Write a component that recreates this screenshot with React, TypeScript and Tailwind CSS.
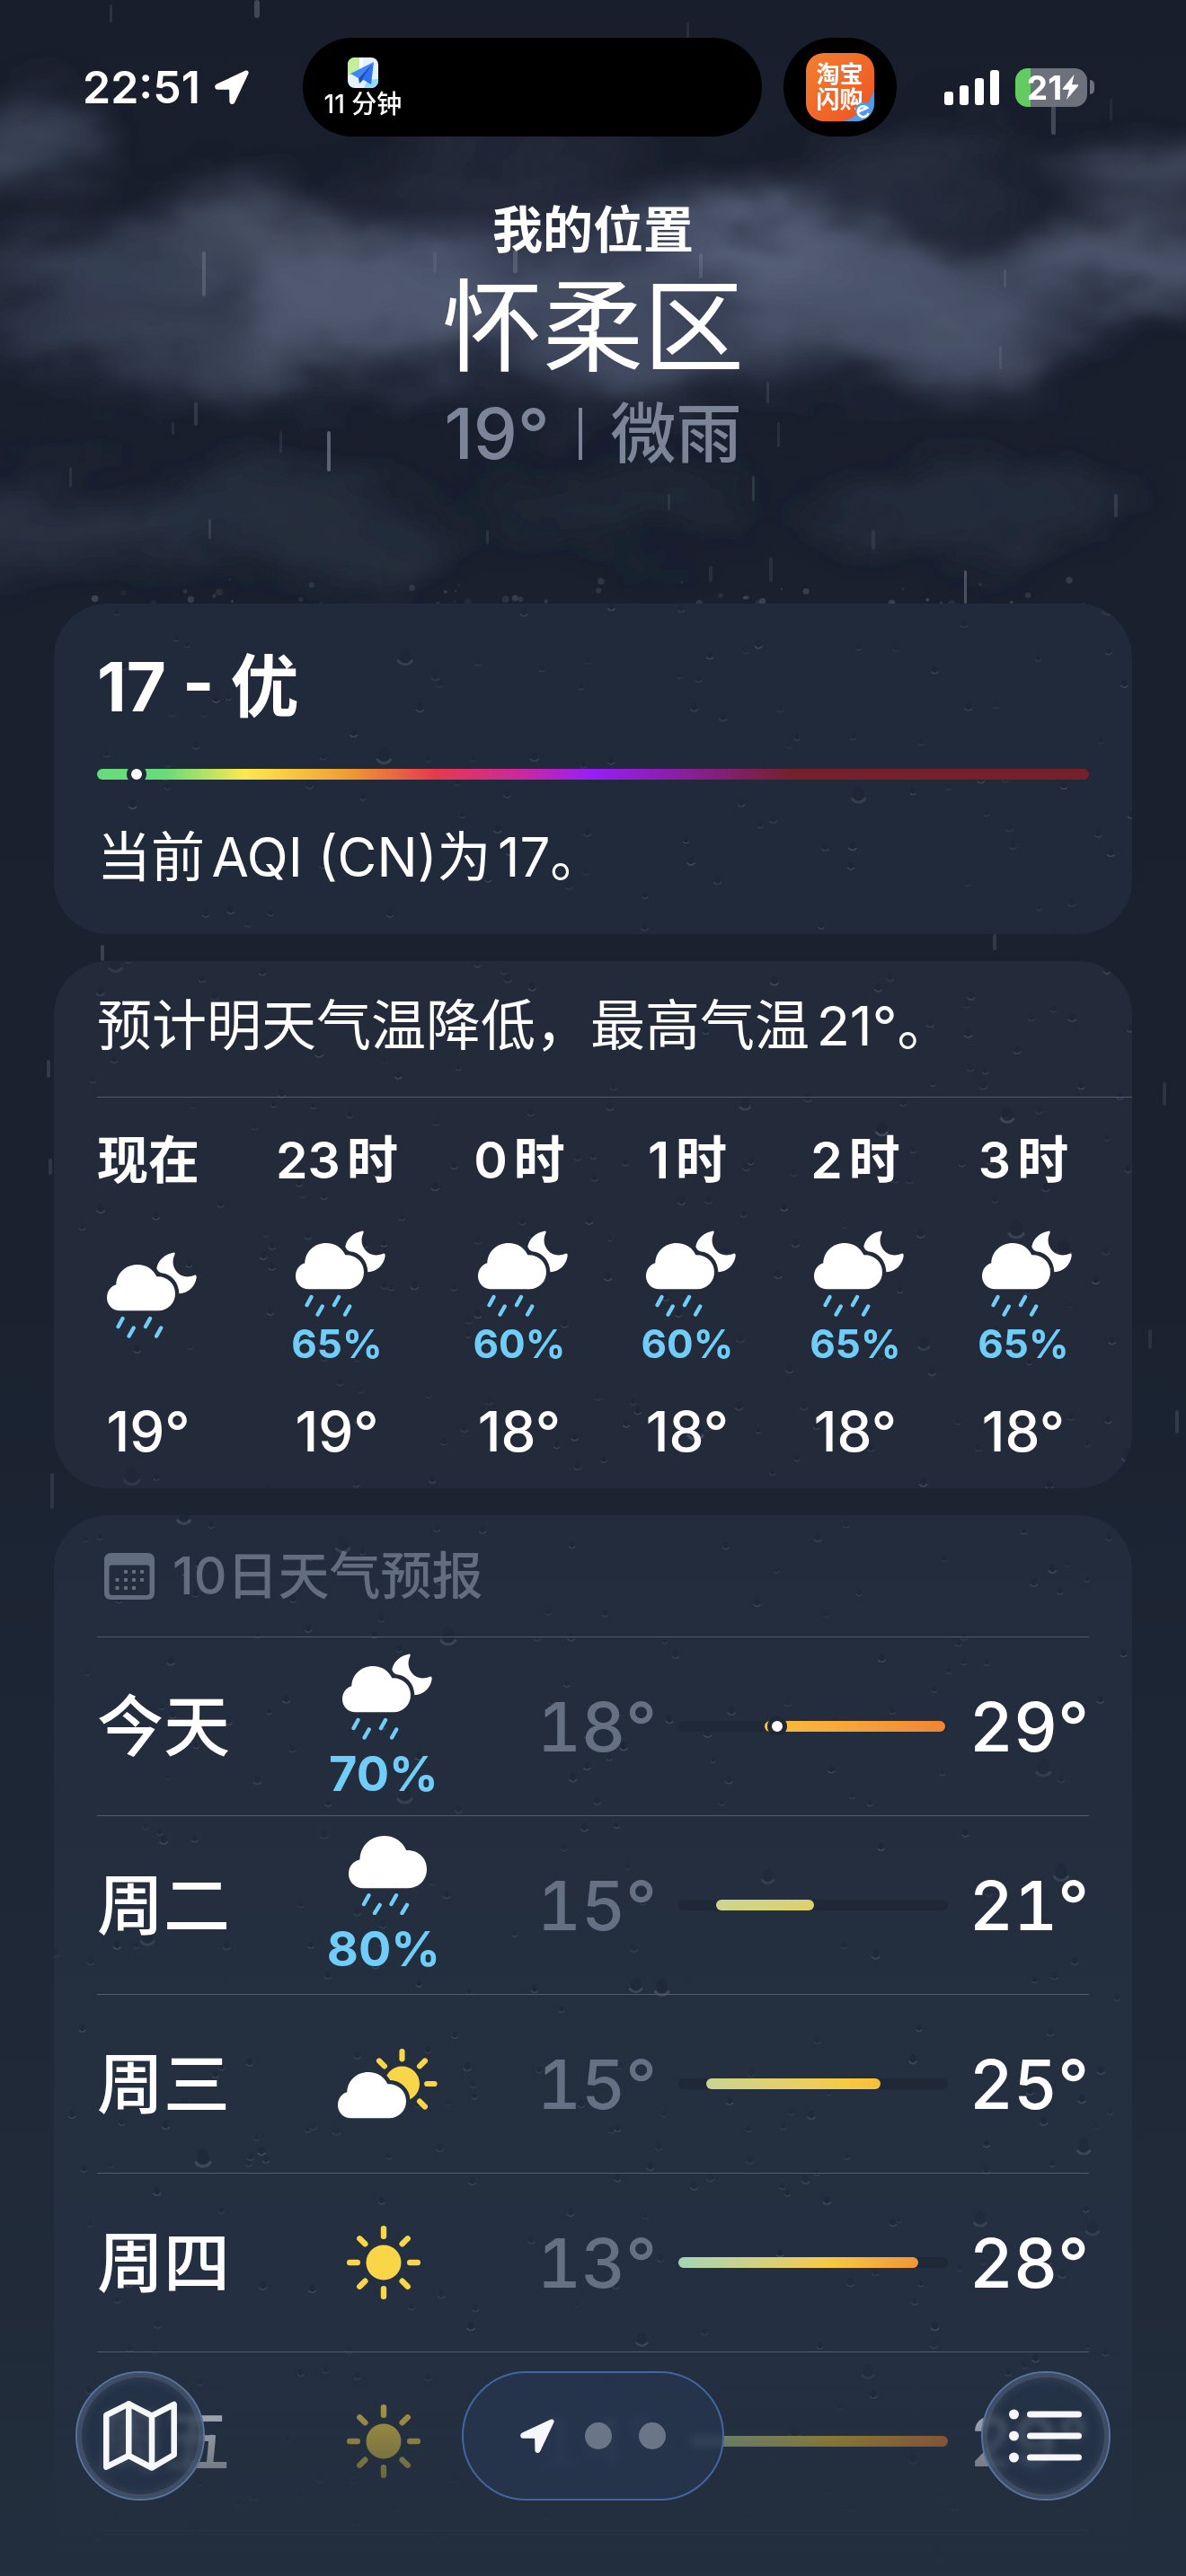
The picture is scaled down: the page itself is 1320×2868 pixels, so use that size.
import type { ReactNode } from "react";

type IconProps = { className?: string };

const RAIN = "#70cdf8";
const SUN = "#f8d648";

function seeded(seed: number) {
  let s = seed;
  return () => {
    s = (s * 1664525 + 1013904223) % 4294967296;
    return s / 4294967296;
  };
}

/* ---------- scenery ---------- */

const CLOUDS = [
  { x: 660, y: 330, rx: 640, ry: 95, c: "#363f54", o: 0.75 },
  { x: 30, y: 165, rx: 75, ry: 34, c: "#4e5970", o: 0.75 },
  { x: 1290, y: 195, rx: 110, ry: 28, c: "#56617a", o: 0.75 },
  { x: 560, y: 185, rx: 170, ry: 26, c: "#384256", o: 0.5 },
  { x: 1010, y: 190, rx: 130, ry: 34, c: "#384256", o: 0.5 },
  { x: 270, y: 265, rx: 120, ry: 46, c: "#4b556b", o: 0.7 },
  { x: 90, y: 300, rx: 130, ry: 40, c: "#3f495e", o: 0.6 },
  { x: 410, y: 335, rx: 150, ry: 66, c: "#59637b", o: 0.8 },
  { x: 620, y: 310, rx: 170, ry: 46, c: "#4c566d", o: 0.7 },
  { x: 860, y: 272, rx: 120, ry: 30, c: "#65708c", o: 0.85 },
  { x: 960, y: 320, rx: 170, ry: 56, c: "#566078", o: 0.7 },
  { x: 1060, y: 385, rx: 120, ry: 46, c: "#4d576d", o: 0.6 },
  { x: 1260, y: 290, rx: 130, ry: 40, c: "#59637b", o: 0.8 },
  { x: 200, y: 400, rx: 190, ry: 30, c: "#434d62", o: 0.7 },
  { x: 690, y: 400, rx: 130, ry: 48, c: "#49536a", o: 0.75 },
  { x: 70, y: 585, rx: 190, ry: 50, c: "#2b3748", o: 0.75 },
  { x: 1080, y: 570, rx: 170, ry: 34, c: "#273243", o: 0.7 },
  { x: 330, y: 580, rx: 160, ry: 50, c: "#273243", o: 0.7 },
  { x: 690, y: 560, rx: 160, ry: 26, c: "#222c3c", o: 0.7 },
];

const STREAKS = [
  [283, 0, 20, 6, 0.25], [122, 5, 20, 3, 0.12], [764, 25, 18, 3, 0.1], [1170, 112, 38, 5, 0.25],
  [1235, 110, 24, 3, 0.08], [225, 280, 50, 4, 0.2], [571, 278, 26, 5, 0.2], [482, 280, 24, 4, 0.1],
  [778, 282, 28, 4, 0.15], [364, 480, 45, 4, 0.4], [216, 448, 26, 4, 0.15], [311, 480, 24, 3, 0.1],
  [837, 530, 28, 3, 0.14], [865, 470, 28, 3, 0.1], [1240, 550, 26, 4, 0.14], [1073, 635, 37, 3, 0.3],
  [232, 578, 22, 3, 0.14], [743, 550, 18, 3, 0.1], [541, 590, 16, 3, 0.12], [970, 590, 22, 4, 0.1],
  [856, 620, 28, 4, 0.1], [789, 630, 18, 4, 0.1], [77, 520, 22, 3, 0.1], [1117, 300, 20, 3, 0.12],
  [1112, 385, 26, 3, 0.1], [853, 425, 24, 3, 0.12], [191, 470, 14, 3, 0.1], [112, 1052, 18, 4, 0.2],
  [1105, 1040, 18, 4, 0.15], [1294, 1205, 26, 4, 0.12], [1278, 1480, 22, 4, 0.1], [1308, 1570, 26, 4, 0.15],
  [52, 1180, 20, 4, 0.15], [54, 1290, 18, 4, 0.14], [56, 1640, 40, 4, 0.12],
];

function Scenery() {
  const rand = seeded(19);
  const splashes = Array.from({ length: 44 }, () => ({
    x: 70 + rand() * 1180,
    y: 672 - rand() * rand() * 38,
    r: 1 + rand() * 3,
    o: 0.06 + rand() * 0.16,
  }));
  return (
    <svg
      className="pointer-events-none absolute inset-x-0 top-0 w-full"
      viewBox="0 0 1320 1700"
      aria-hidden="true"
    >
      <defs>
        <filter id="cloud" x="-20%" y="-20%" width="140%" height="140%">
          <feTurbulence type="fractalNoise" baseFrequency="0.006 0.012" numOctaves="5" seed="8" result="n" />
          <feGaussianBlur in="SourceGraphic" stdDeviation="24" result="b" />
          <feDisplacementMap in="b" in2="n" scale="120" xChannelSelector="R" yChannelSelector="G" />
          <feGaussianBlur stdDeviation="5" />
        </filter>
      </defs>
      <g filter="url(#cloud)">
        {CLOUDS.map((c, i) => (
          <ellipse key={i} cx={c.x} cy={c.y} rx={c.rx} ry={c.ry} fill={c.c} opacity={c.o} />
        ))}
      </g>
      {STREAKS.map(([x, y, h, w, o], i) => (
        <rect key={i} x={x} y={y} width={w} height={h} rx={w / 2} fill="#b9c6da" opacity={o} />
      ))}
      {splashes.map((p, i) => (
        <circle key={i} cx={p.x} cy={p.y} r={p.r} fill="#b9c6da" opacity={p.o} />
      ))}
    </svg>
  );
}

function Drops({ seed, height, count }: { seed: number; height: number; count: number }) {
  const rand = seeded(seed);
  const drops = Array.from({ length: count }, () => ({
    x: rand() * 1200,
    y: rand() * height,
    r: rand() > 0.94 ? 7 + rand() * 3 : 3 + rand() * 2,
    o: 0.4 + rand() * 0.6,
  }));
  return (
    <svg
      className="pointer-events-none absolute inset-0 h-full w-full"
      viewBox={`0 0 1200 ${height}`}
      preserveAspectRatio="xMidYMid slice"
      aria-hidden="true"
    >
      {drops.map((d, i) => (
        <g key={i} transform={`translate(${d.x} ${d.y})`} opacity={d.o}>
          <ellipse rx={d.r * 0.7} ry={d.r} cy={-d.r * 0.3} fill="#182130" opacity="0.4" />
          <path
            d={`M${-d.r * 0.8} ${d.r * 0.3}A${d.r} ${d.r} 0 0 0 ${d.r * 0.8} ${d.r * 0.3}`}
            fill="none"
            stroke="#8f9db3"
            strokeWidth={d.r * 0.35}
            strokeLinecap="round"
            opacity="0.28"
          />
        </g>
      ))}
    </svg>
  );
}

/* ---------- icons ---------- */

function LocationArrow({ className }: IconProps) {
  return (
    <svg className={className} viewBox="0 0 38 38" fill="currentColor" aria-hidden="true">
      <path d="M33.8.8 2.2 15.6C-.9 17.200-.3 21.700 3.100 21.700L15.200 21.800C15.900 21.800 16.200 22.100 16.200 22.800L16.400 34.900C16.500 38.300 20.800 39 22.300 35.900L37.300 4.300C38.500 1.600 36.500-.4 33.800.8Z" />
    </svg>
  );
}

const CLOUD =
  "M14.700 65.200C6.600 65.200 0 58.900 0 50.900 0 43.400 4.200 38.200 10.300 36.300 10.600 23.600 20.800 14 34 14 44 14 51.500 19.200 55.300 27.200 67 26.600 76 34.900 76 46.200 76 57 67.800 65.200 57 65.200Z";

function CloudMoonRain({ className }: IconProps) {
  return (
    <svg className={className} viewBox="0 0 100 96" aria-hidden="true">
      <path d={CLOUD} fill="#fff" />
      <path
        d="M74.500.5C64 2.500 57 9 55.300 18Q57 22.300 60.500 23.200C72 24.500 80 33.500 80.400 46.200 90.500 45.800 98.300 38.500 99.700 28.200Q99.900 24.600 97.300 25.800C89.500 29 82 27.300 77.500 21.700 73 16 72.400 9 75.500 2.700Q76.300.2 74.500.5Z"
        fill="#fff"
      />
      <g stroke={RAIN} strokeWidth="4.400" strokeLinecap="round">
        <path d="M17.500 74 12.600 83M29.700 84.500 24.600 93.500M48 74 43 83M60.200 84.500 55.100 93.500" />
      </g>
    </svg>
  );
}

function CloudRain({ className }: IconProps) {
  return (
    <svg className={className} viewBox="0 0 87 88" aria-hidden="true">
      <path
        d="M16 58.200C7 58.200 0 51.200 0 42.500 0 34 5 28.200 12.500 26.300 13 11.200 24.500 0 39.500 0 51 0 60 6.200 64.200 16 77.500 15.400 87 24.500 87 37 87 49.200 78 58.200 66 58.200Z"
        fill="#fff"
      />
      <g stroke={RAIN} strokeWidth="4.400" strokeLinecap="round">
        <path d="M22.500 66.200 17 76M34.700 76.800 29 86M53 66.200 47.500 76M65 76.800 59.500 86" />
      </g>
    </svg>
  );
}

function Sun({ className }: IconProps) {
  return (
    <svg className={className} viewBox="0 0 82 82" aria-hidden="true">
      <circle cx="41" cy="41" r="19.500" fill={SUN} />
      <g stroke={SUN} strokeWidth="6.400" strokeLinecap="round">
        {[0, 45, 90, 135, 180, 225, 270, 315].map((a) => (
          <path key={a} d="M41 3.200V11.800" transform={`rotate(${a} 41 41)`} />
        ))}
      </g>
    </svg>
  );
}

function CloudSun({ className }: IconProps) {
  return (
    <svg className={className} viewBox="0 0 111 78" aria-hidden="true">
      <circle cx="71.500" cy="39" r="19.500" fill={SUN} />
      <g stroke={SUN} strokeWidth="6.200" strokeLinecap="round">
        {[-45, 0, 45, 90, 135].map((a) => (
          <path key={a} d="M71.500 3V11.300" transform={`rotate(${a} 71.500 39)`} />
        ))}
      </g>
      <g transform="translate(0 12)">
        <path d={CLOUD} fill="#fff" stroke="#243041" strokeWidth="9" />
        <path d={CLOUD} fill="#fff" />
      </g>
    </svg>
  );
}

function CalendarIcon({ className }: IconProps) {
  const dots = [
    [24, 21], [33, 21], [42, 21],
    [14.5, 30], [24, 30], [33, 30], [42, 30],
    [14.5, 39], [24, 39], [33, 39],
  ];
  return (
    <svg className={className} viewBox="0 0 56 52" aria-hidden="true">
      <path
        fill="currentColor"
        fillRule="evenodd"
        d="M8 0H48Q56 0 56 8V44Q56 52 48 52H8Q0 52 0 44V8Q0 0 8 0ZM8.500 13.500Q5.500 13.500 5.500 16.500V43.500Q5.500 47 9 47H47Q50.500 47 50.500 43.500V16.500Q50.500 13.500 47.500 13.500Z"
      />
      {dots.map(([x, y]) => (
        <rect key={`${x}-${y}`} x={x - 2} y={y - 2} width="4" height="4" rx="0.800" fill="currentColor" />
      ))}
    </svg>
  );
}

function MapIcon({ className }: IconProps) {
  return (
    <svg
      className={className}
      viewBox="0 0 82 78"
      fill="none"
      stroke="currentColor"
      strokeWidth="6.500"
      strokeLinejoin="round"
      strokeLinecap="round"
      aria-hidden="true"
    >
      <path d="M3.300 16 28.300 3.300 54 16.700 78.700 4V60L54 74.500 28.300 61 3.300 73.700ZM28.300 3.300V61M54 16.700V74.500" />
    </svg>
  );
}

function ListIcon({ className }: IconProps) {
  return (
    <svg className={className} viewBox="0 0 82 60" fill="currentColor" aria-hidden="true">
      {[6, 30, 54].map((y) => (
        <g key={y}>
          <circle cx="5.500" cy={y} r="5.500" />
          <rect x="20" y={y - 3.5} width="61" height="7" rx="3.500" />
        </g>
      ))}
    </svg>
  );
}

function NavAppIcon() {
  return (
    <svg className="size-[34px]" viewBox="0 0 34 34" role="img" aria-label="导航">
      <clipPath id="nav">
        <rect width="34" height="34" rx="8" />
      </clipPath>
      <g clipPath="url(#nav)">
        <rect width="34" height="34" fill="#e6f1fd" />
        <path d="M0 0H13V17L0 20Z" fill="#c3ef9a" />
        <path d="M13 0H17V12L13 14Z" fill="#fff" />
        <path d="M18 34 22 25 34 24V34Z" fill="#8fdcfb" />
        <path d="M29 5 3 18 12 23Z" fill="#3d86f7" />
        <path d="M29 5 12 23 13 29 17 25Z" fill="#1c4fb8" />
        <path d="M29 5 16 24 26 30Z" fill="#2f73f0" />
      </g>
    </svg>
  );
}

/* ---------- status bar ---------- */

function StatusBar() {
  return (
    <div className="flex h-[110px] items-center">
      <div className="flex w-[25.5%] items-center gap-4 pl-[92px]">
        <time className="text-[50px] leading-none font-semibold text-white">22:51</time>
        <LocationArrow className="size-[38px] shrink-0 text-white" />
      </div>
      <div className="flex h-full w-[511px] items-center rounded-full bg-black pl-6">
        <div className="flex flex-col items-center gap-1">
          <NavAppIcon />
          <span className="text-[28px] leading-7 font-medium text-white">11 分钟</span>
        </div>
      </div>
      <div className="ml-6 flex h-full w-[126px] items-center justify-center rounded-full bg-black">
        <div className="relative flex size-[76px] flex-col items-center justify-center overflow-hidden rounded-[20px] bg-linear-to-br from-[#f08030] to-[#ef4f22] text-[26px] leading-7 font-bold text-white">
          <svg className="absolute right-0 bottom-0 size-9" viewBox="0 0 36 36" aria-hidden="true">
            <path d="M0 36C18 32 30 20 36 0V36Z" fill="#4a9df0" />
          </svg>
          <span className="relative">淘宝</span>
          <span className="relative">闪购</span>
          <svg className="absolute right-0 bottom-0 size-6" viewBox="0 0 24 24" aria-hidden="true">
            <circle cx="12" cy="12" r="9" fill="#4a9df0" />
            <path d="M7 13 16 9A6 6 0 1 0 17 16" fill="none" stroke="#fff" strokeWidth="2.600" strokeLinecap="round" />
          </svg>
        </div>
      </div>
      <div className="flex flex-1 items-center justify-end gap-[18px] pr-[102px]">
        <svg className="h-10 w-[61px]" viewBox="0 0 61 40" fill="#fff" role="img" aria-label="信号">
          <rect x="0" y="25" width="10" height="15" rx="3" />
          <rect x="17" y="18" width="10" height="22" rx="3" />
          <rect x="34" y="10" width="10" height="30" rx="3" />
          <rect x="51" y="1" width="10" height="39" rx="3" />
        </svg>
        <div className="flex items-center gap-[3px]">
          <div className="flex h-[43px] w-20 items-center justify-center rounded-[14px] bg-linear-to-r from-[#63cb62] from-21% to-[#6d717b] to-21% pl-1 text-[37px] leading-none font-bold text-white">
            21
            <svg className="h-7 w-[19px]" viewBox="0 0 19 28" fill="#fff" aria-hidden="true">
              <path d="M13.500 0 1 15.200Q0 16.800 1.800 16.800H8L5 28 18 12.800Q19 11.200 17.200 11.200H11Z" />
            </svg>
          </div>
          <div className="h-4 w-[5px] rounded-r-full bg-[#6d717b]" />
        </div>
      </div>
    </div>
  );
}

/* ---------- cards ---------- */

function AirQuality() {
  return (
    <section className="relative overflow-hidden rounded-[60px] bg-[#212a3a] px-12 pt-[52px] pb-[50px]">
      <Drops seed={3} height={368} count={110} />
      <div className="relative">
        <h2 className="text-[76px] leading-20 font-bold">17 - 优</h2>
        <div className="relative mt-[52px] h-3 rounded-full bg-[linear-gradient(90deg,#68dc78_0%,#68dc78_7%,#ffe84f_15%,#ef9f33_25%,#e63a4c_34%,#c928a0_43%,#981ef8_50%,#76202c_70%,#76202c_100%)]">
          <span className="absolute -top-[5px] left-[4%] size-[22px] -translate-x-1/2 rounded-full border-[5px] border-[#212a3a] bg-white" />
        </div>
        <p className="mt-[50px] text-[60px] leading-[72px] [text-autospace:normal]">当前AQI (CN)为17。</p>
      </div>
    </section>
  );
}

const HOURS = [
  { label: "现在", temp: "19°" },
  { label: "23时", chance: "65%", temp: "19°" },
  { label: "0时", chance: "60%", temp: "18°" },
  { label: "1时", chance: "60%", temp: "18°" },
  { label: "2时", chance: "65%", temp: "18°" },
  { label: "3时", chance: "65%", temp: "18°" },
];

function Hourly() {
  return (
    <section className="relative overflow-hidden rounded-[60px] bg-[#232b3b] pl-12">
      <Drops seed={11} height={587} count={190} />
      <div className="relative">
        <p className="border-b border-[#525c6c] pt-9 pb-[43px] text-[61px] leading-[72px] [text-autospace:normal]">
          预计明天气温降低，最高气温21°。
        </p>
        <ol className="grid grid-cols-[114px_132px_repeat(4,100px)] gap-x-[87px] pt-[38px] pb-[31px] text-center">
          {HOURS.map((h) => (
            <li key={h.label} className="flex flex-col items-center whitespace-nowrap">
              <span className="text-[57px] leading-16 font-semibold [text-autospace:normal]">{h.label}</span>
              <div className="mt-[45px] flex h-[146px] flex-col items-center justify-center gap-3">
                <CloudMoonRain className="ml-2 h-24 w-[100px]" />
                {h.chance && <span className="text-[44px] leading-9 font-bold text-[#70cdf8]">{h.chance}</span>}
              </div>
              <span className="mt-[47px] text-[62px] leading-16 font-medium">{h.temp}</span>
            </li>
          ))}
        </ol>
      </div>
    </section>
  );
}

type Day = {
  day: string;
  icon: ReactNode;
  chance?: string;
  low: string;
  high: string;
  start: number;
  end: number;
  fill: string;
  now?: number;
};

const DAYS: Day[] = [
  {
    day: "今天",
    icon: <CloudMoonRain className="ml-2 h-24 w-[100px]" />,
    chance: "70%",
    low: "18°",
    high: "29°",
    start: 32,
    end: 99,
    fill: "bg-linear-to-r from-[#fbc040] to-[#ee8535]",
    now: 36.7,
  },
  {
    day: "周二",
    icon: <CloudRain className="ml-2 h-22 w-[87px]" />,
    chance: "80%",
    low: "15°",
    high: "21°",
    start: 14,
    end: 50.3,
    fill: "bg-linear-to-r from-[#cbd68e] to-[#ddd06e]",
  },
  {
    day: "周三",
    icon: <CloudSun className="ml-2 h-[78px] w-[111px]" />,
    low: "15°",
    high: "25°",
    start: 10.3,
    end: 75,
    fill: "bg-linear-to-r from-[#c9d690] via-[#f7c943] via-80% to-[#fbbd3d]",
  },
  {
    day: "周四",
    icon: <Sun className="size-[82px]" />,
    low: "13°",
    high: "28°",
    start: 0,
    end: 89,
    fill: "bg-linear-to-r from-[#a3d6b4] via-[#f7c943] via-62% to-[#f19636]",
  },
  {
    day: "周五",
    icon: <Sun className="size-[82px]" />,
    low: "14°",
    high: "29°",
    start: 4,
    end: 100,
    fill: "bg-linear-to-r from-[#a8d8a0] via-[#f0c82c] via-55% to-[#ee7f30]",
  },
];

function Forecast() {
  return (
    <section className="relative grow overflow-hidden rounded-t-[60px] bg-linear-to-b from-[#232c3c] to-[#243142] px-12">
      <Drops seed={29} height={1180} count={330} />
      <div className="relative">
        <h2 className="flex h-[135px] items-center gap-5 pl-2 text-[57px] leading-16 font-medium text-[#626d80]">
          <CalendarIcon className="h-13 w-14" />
          10日天气预报
        </h2>
        <ol className="border-b border-[#525c6c]">
          {DAYS.map((d) => (
            <li
              key={d.day}
              className="grid h-[199px] grid-cols-[234px_170px_243px_1fr_157px] items-center border-t border-[#525c6c] text-[76px] leading-24 font-medium tabular-nums"
            >
              <span className="text-[74px]">{d.day}</span>
              <div className={`flex flex-col items-center gap-[18px] ${d.chance ? "pb-2" : ""}`}>
                {d.icon}
                {d.chance && (
                  <span className="text-[54px] leading-10 font-bold text-[#70cdf8] proportional-nums">{d.chance}</span>
                )}
              </div>
              <span className="pr-6 text-right text-[#657084]">{d.low}</span>
              <div className="relative h-3 rounded-full bg-[#1e2837]">
                <div
                  className={`absolute inset-y-0 rounded-full ${d.fill}`}
                  style={{ left: `${d.start}%`, width: `${d.end - d.start}%` }}
                />
                {d.now !== undefined && (
                  <span
                    className="absolute -top-[5px] size-[22px] -translate-x-1/2 rounded-full border-[5px] border-[#1e2837] bg-white"
                    style={{ left: `${d.now}%` }}
                  />
                )}
              </div>
              <span className="text-right">{d.high}</span>
            </li>
          ))}
        </ol>
      </div>
    </section>
  );
}

/* ---------- floating toolbar ---------- */

const ROUND =
  "flex size-36 items-center justify-center rounded-full border-2 border-[#56749f] bg-[#25334a]/70 text-[#f5f7fa] shadow-[inset_0_0_0_5px_rgba(86,100,124,0.45),inset_0_0_8px_8px_rgba(96,106,124,0.22)] backdrop-blur-[4px]";

function Toolbar() {
  return (
    <>
      <div className="pointer-events-none fixed inset-x-0 bottom-0 h-[248px] bg-[linear-gradient(180deg,rgba(35,46,62,0)_0%,rgba(35,46,62,0.4)_24%,rgba(35,46,62,0.65)_54%,rgba(35,46,62,0.9)_80%,#232e3e_100%)]" />
      <nav className="fixed inset-x-0 bottom-0 flex items-center justify-between px-21 pb-21">
        <button type="button" aria-label="地图" className={ROUND}>
          <MapIcon className="h-[78px] w-[82px]" />
        </button>
        <button
          type="button"
          aria-label="切换位置"
          className="flex h-36 w-[292px] items-center justify-center gap-[30px] rounded-full border-2 border-[#42669f] bg-[#26354f]/80 backdrop-blur-[4px]"
        >
          <LocationArrow className="mr-1 size-[38px] text-[#f5f7fa]" />
          <span className="size-[30px] rounded-full bg-[#6a7587]" />
          <span className="size-[30px] rounded-full bg-[#6a7587]" />
        </button>
        <button type="button" aria-label="列表" className={ROUND}>
          <ListIcon className="h-[60px] w-[82px]" />
        </button>
      </nav>
    </>
  );
}

export default function App() {
  return (
    <main className="relative flex min-h-screen flex-col overflow-hidden bg-linear-to-b from-[#191e2c] via-[#1a2230] via-50% to-[#222d3b] font-[Inter,'Noto_Sans_CJK_SC',sans-serif] text-white">
      <Scenery />
      <div className="relative flex grow flex-col pt-[42px]">
        <StatusBar />
        <header className="mt-17 mb-[142px] flex flex-col items-center">
          <p className="text-[56px] leading-18 font-semibold">我的位置</p>
          <h1 className="text-[112px] leading-36 font-normal">怀柔区</h1>
          <p className="flex items-center gap-8 text-[78px] leading-[94px] font-medium text-[#7b8597]">
            19°
            <span className="h-[58px] w-1 bg-[#7b8597]" />
            <span className="text-[73px]">微雨</span>
          </p>
        </header>
        <div className="flex grow flex-col gap-[30px] px-[60px]">
          <AirQuality />
          <Hourly />
          <Forecast />
        </div>
      </div>
      <Toolbar />
    </main>
  );
}
